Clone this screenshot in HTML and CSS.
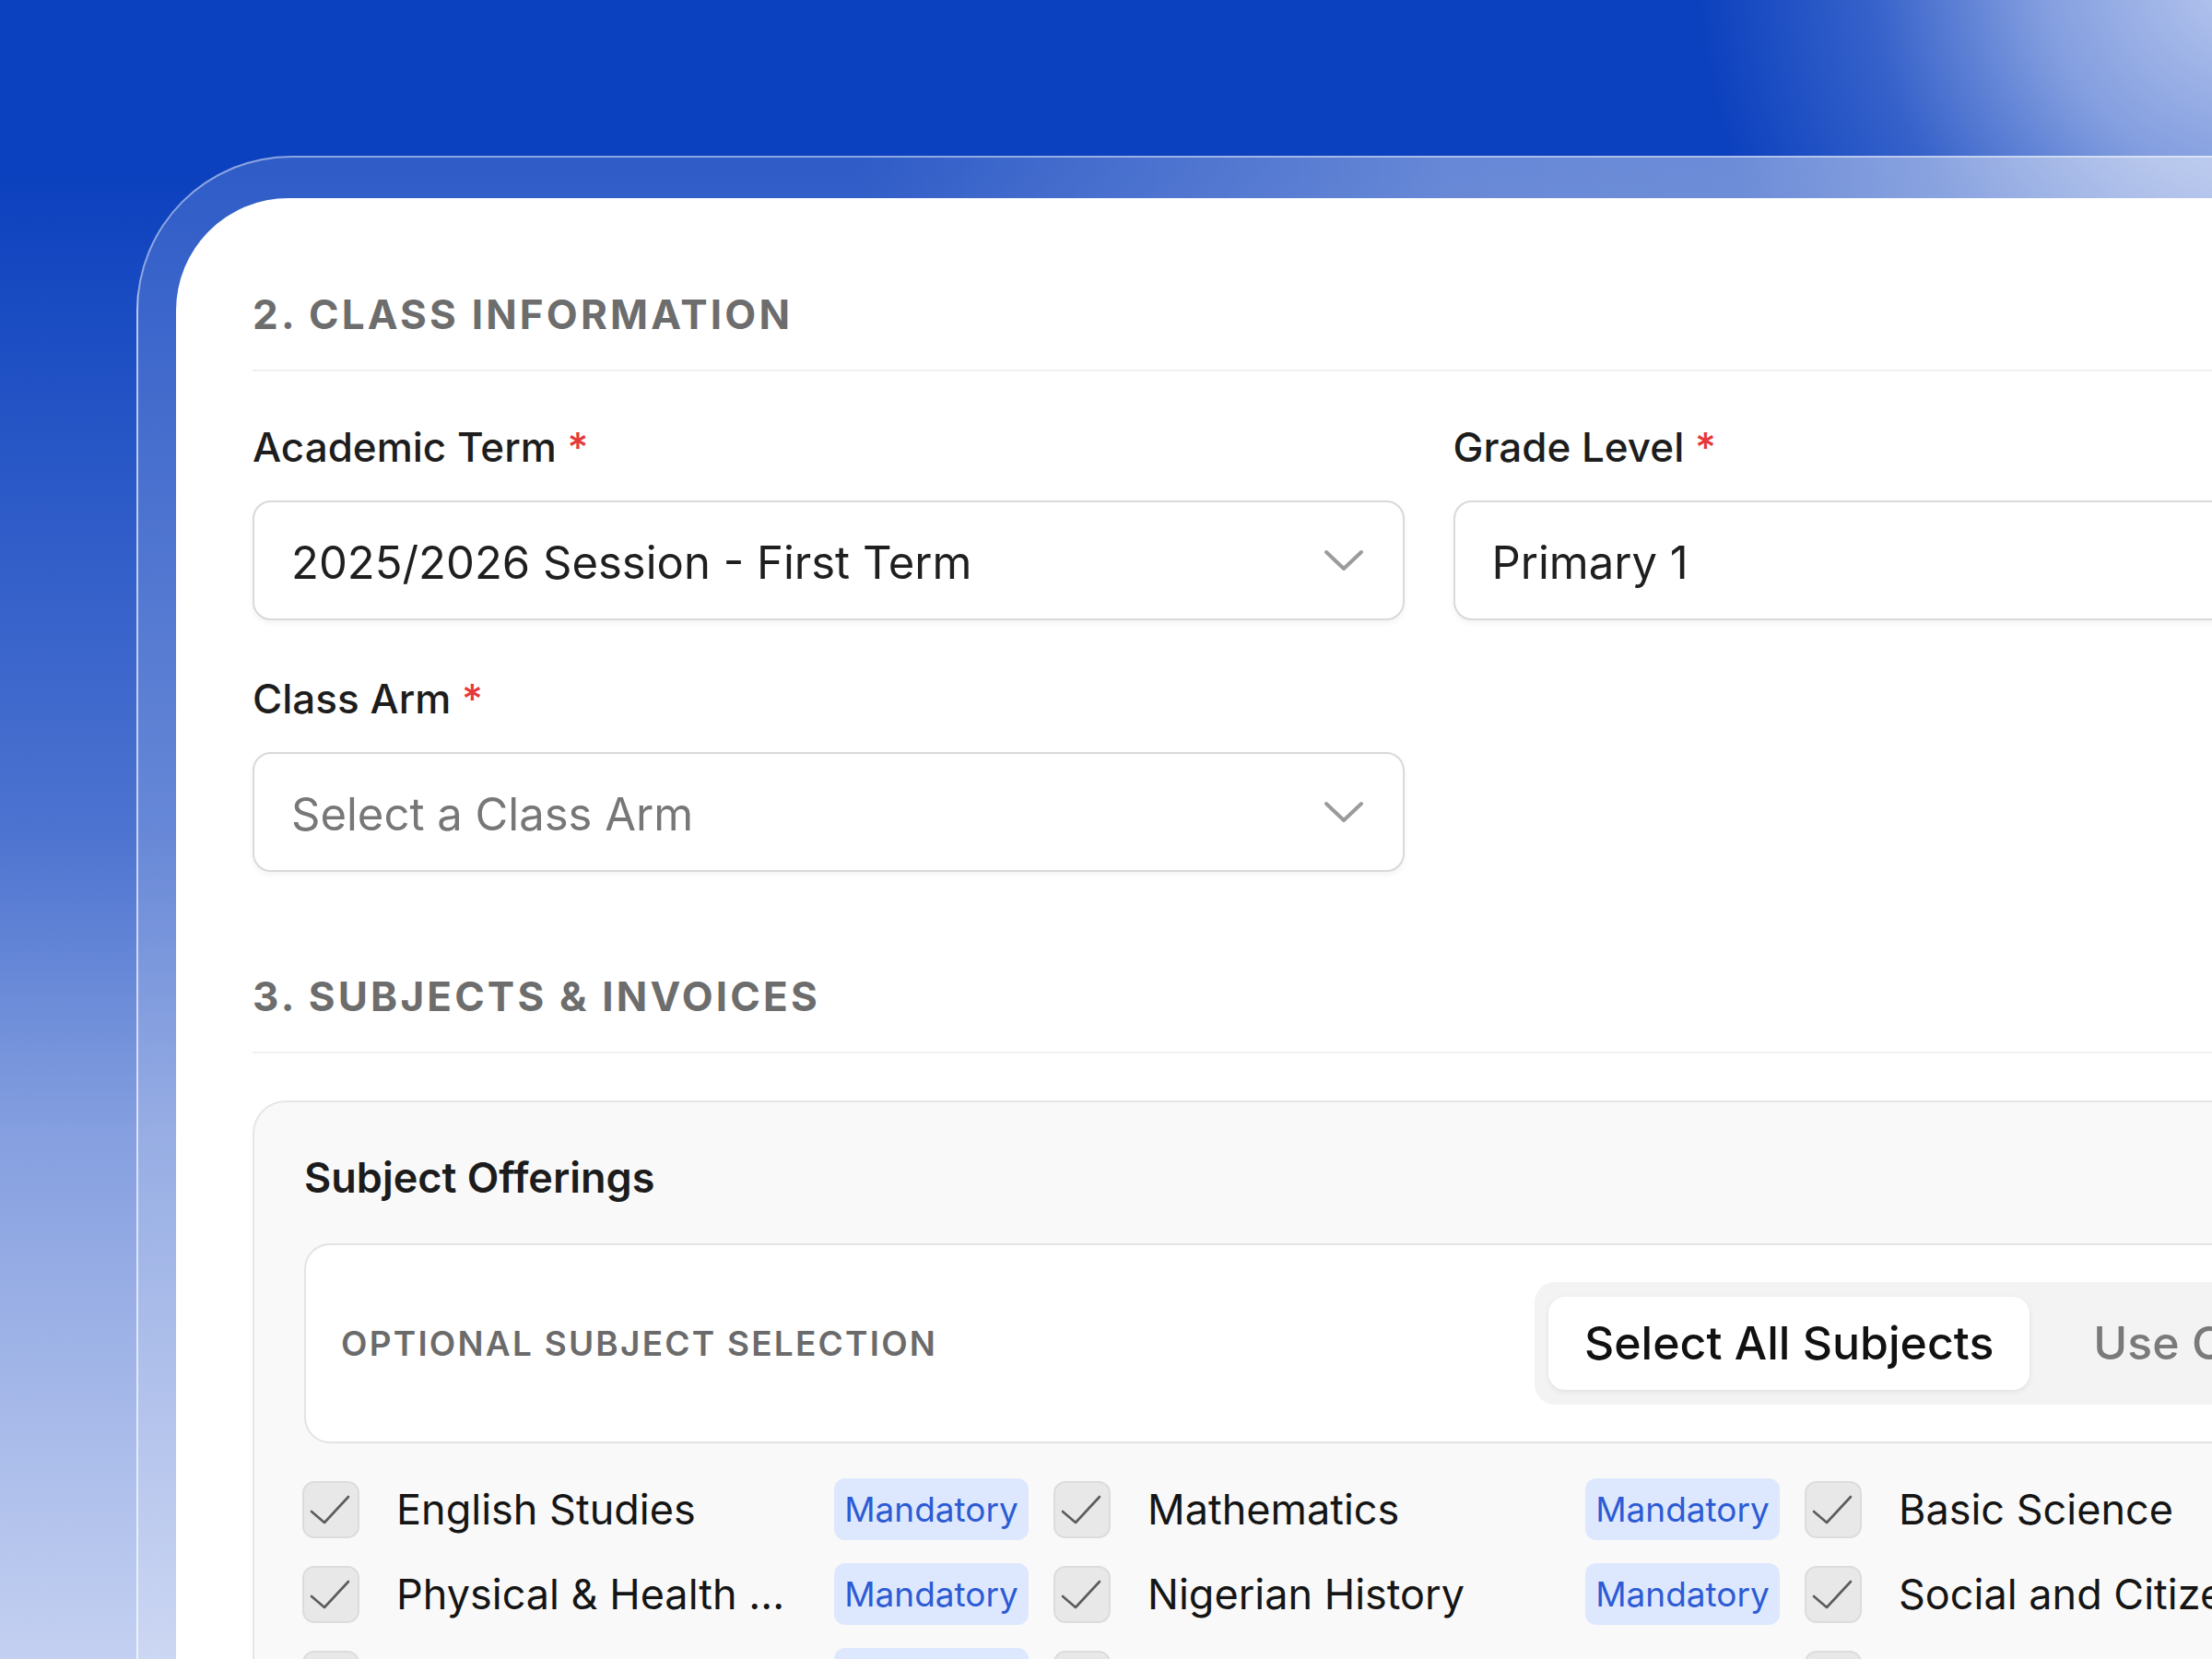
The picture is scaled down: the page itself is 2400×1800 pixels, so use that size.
FILE: index.html
```html
<!DOCTYPE html>
<html lang="en">
<head>
<meta charset="utf-8">
<title>Class Information</title>
<link rel="stylesheet" href="styles.css">
</head>
<body>
<div class="frame">
  <div class="card">
    <section class="section">
      <h2 class="section-title">2. Class Information</h2>
      <div class="field-grid">
        <div class="field">
          <label class="field-label">Academic Term <span class="req">*</span></label>
          <div class="control">
            <span class="control-value">2025/2026 Session - First Term</span>
            <svg class="chevron" width="44" height="24" viewBox="0 0 44 24"><path d="M3 3 L22 21 L41 3" fill="none" stroke="#9b9b9b" stroke-width="4" stroke-linecap="round" stroke-linejoin="round"/></svg>
          </div>
        </div>
        <div class="field">
          <label class="field-label">Grade Level <span class="req">*</span></label>
          <div class="control">
            <span class="control-value">Primary 1</span>
          </div>
        </div>
        <div class="field">
          <label class="field-label">Class Arm <span class="req">*</span></label>
          <div class="control">
            <span class="control-value placeholder">Select a Class Arm</span>
            <svg class="chevron" width="44" height="24" viewBox="0 0 44 24"><path d="M3 3 L22 21 L41 3" fill="none" stroke="#9b9b9b" stroke-width="4" stroke-linecap="round" stroke-linejoin="round"/></svg>
          </div>
        </div>
      </div>
    </section>

    <section class="section section-subjects">
      <h2 class="section-title">3. Subjects &amp; Invoices</h2>
      <div class="offerings">
        <h3 class="offerings-title">Subject Offerings</h3>
        <div class="selection-bar">
          <span class="selection-label">Optional Subject Selection</span>
          <div class="segmented">
            <button class="seg active">Select All Subjects</button>
            <button class="seg">Use Class Preset</button>
          </div>
        </div>
        <div class="subject-grid">
          <div class="subject">
            <span class="checkbox"><svg width="58" height="58" viewBox="0 0 58 58"><path d="M8 31 L22 43 L48 15" fill="none" stroke="#5c5c5c" stroke-width="2.6" stroke-linecap="round" stroke-linejoin="round"/></svg></span>
            <span class="subject-name">English Studies</span>
            <span class="badge">Mandatory</span>
          </div>
          <div class="subject">
            <span class="checkbox"><svg width="58" height="58" viewBox="0 0 58 58"><path d="M8 31 L22 43 L48 15" fill="none" stroke="#5c5c5c" stroke-width="2.6" stroke-linecap="round" stroke-linejoin="round"/></svg></span>
            <span class="subject-name">Mathematics</span>
            <span class="badge">Mandatory</span>
          </div>
          <div class="subject">
            <span class="checkbox"><svg width="58" height="58" viewBox="0 0 58 58"><path d="M8 31 L22 43 L48 15" fill="none" stroke="#5c5c5c" stroke-width="2.6" stroke-linecap="round" stroke-linejoin="round"/></svg></span>
            <span class="subject-name">Basic Science</span>
            <span class="badge">Mandatory</span>
          </div>
          <div class="subject">
            <span class="checkbox"><svg width="58" height="58" viewBox="0 0 58 58"><path d="M8 31 L22 43 L48 15" fill="none" stroke="#5c5c5c" stroke-width="2.6" stroke-linecap="round" stroke-linejoin="round"/></svg></span>
            <span class="subject-name">Physical &amp; Health Education</span>
            <span class="badge">Mandatory</span>
          </div>
          <div class="subject">
            <span class="checkbox"><svg width="58" height="58" viewBox="0 0 58 58"><path d="M8 31 L22 43 L48 15" fill="none" stroke="#5c5c5c" stroke-width="2.6" stroke-linecap="round" stroke-linejoin="round"/></svg></span>
            <span class="subject-name">Nigerian History</span>
            <span class="badge">Mandatory</span>
          </div>
          <div class="subject">
            <span class="checkbox"><svg width="58" height="58" viewBox="0 0 58 58"><path d="M8 31 L22 43 L48 15" fill="none" stroke="#5c5c5c" stroke-width="2.6" stroke-linecap="round" stroke-linejoin="round"/></svg></span>
            <span class="subject-name">Social and Citizenship Studies</span>
            <span class="badge">Mandatory</span>
          </div>
          <div class="subject">
            <span class="checkbox"><svg width="58" height="58" viewBox="0 0 58 58"><path d="M8 31 L22 43 L48 15" fill="none" stroke="#5c5c5c" stroke-width="2.6" stroke-linecap="round" stroke-linejoin="round"/></svg></span>
            <span class="subject-name">Cultural &amp; Creative Arts</span>
            <span class="badge">Mandatory</span>
          </div>
          <div class="subject">
            <span class="checkbox"><svg width="58" height="58" viewBox="0 0 58 58"><path d="M8 31 L22 43 L48 15" fill="none" stroke="#5c5c5c" stroke-width="2.6" stroke-linecap="round" stroke-linejoin="round"/></svg></span>
            <span class="subject-name">Computer Studies</span>
          </div>
          <div class="subject">
            <span class="checkbox"><svg width="58" height="58" viewBox="0 0 58 58"><path d="M8 31 L22 43 L48 15" fill="none" stroke="#5c5c5c" stroke-width="2.6" stroke-linecap="round" stroke-linejoin="round"/></svg></span>
            <span class="subject-name">French Language</span>
          </div>
        </div>
      </div>
    </section>
  </div>
</div>
</body>
</html>
```

FILE: styles.css
```css
html, body {
  margin: 0;
  padding: 0;
  width: 2400px;
  height: 1800px;
  overflow: hidden;
}

body {
  font-family: Inter, "Noto Sans", "Liberation Sans", sans-serif;
  background:
    radial-gradient(circle 680px at 2450px -40px,
      rgba(205, 216, 244, 0.92) 0%,
      rgba(205, 216, 244, 0.62) 35%,
      rgba(205, 216, 244, 0.22) 62%,
      rgba(205, 216, 244, 0) 90%),
    linear-gradient(to bottom,
      rgba(203, 214, 243, 0) 10%,
      rgba(203, 214, 243, 0.12) 24%,
      rgba(203, 214, 243, 0.34) 50%,
      rgba(203, 214, 243, 0.63) 68%,
      rgba(203, 214, 243, 0.96) 100%),
    #0b40be;
}

.frame {
  box-sizing: border-box;
  width: 2600px;
  min-height: 1700px;
  margin: 169px 0 0 148px;
  padding: 44px 0 0 41px;
  border-top-left-radius: 168px;
  border-top: 2px solid rgba(255, 255, 255, 0.45);
  border-left: 2px solid rgba(255, 255, 255, 0.45);
  background: linear-gradient(to right,
    rgba(255, 255, 255, 0.15) 30%,
    rgba(255, 255, 255, 0.38) 55%,
    rgba(255, 255, 255, 0.44) 90%);
}

.card {
  box-sizing: border-box;
  width: 2719px;
  min-height: 1620px;
  padding: 102px 84px 0 83px;
  background: #ffffff;
  border-top-left-radius: 122px;
}

.section-title {
  margin: 0;
  padding-bottom: 36px;
  border-bottom: 2px solid #f0f0f0;
  font-size: 44px;
  line-height: 48px;
  font-weight: 700;
  letter-spacing: 0.072em;
  text-transform: uppercase;
  color: #6d6d6d;
}

.field-grid {
  display: grid;
  grid-template-columns: 1fr 1fr;
  column-gap: 53px;
  row-gap: 59px;
  margin-top: 56px;
}

.field-label {
  display: block;
  margin-bottom: 32px;
  font-size: 44px;
  line-height: 52px;
  font-weight: 500;
  color: #1d1d1d;
}

.req {
  color: #e5393a;
}

.control {
  box-sizing: border-box;
  height: 130px;
  display: flex;
  align-items: center;
  justify-content: space-between;
  padding: 4px 42px 0 40px;
  background: #ffffff;
  border: 2px solid #d9d9d9;
  border-radius: 20px;
  box-shadow: 0 3px 6px rgba(0, 0, 0, 0.05);
  font-size: 49px;
  color: #1f1f1f;
}

.control-value.placeholder {
  color: #777777;
}

.chevron {
  flex: none;
  margin-top: -4px;
}

.section-subjects {
  margin-top: 111px;
}

.offerings {
  margin-top: 51px;
  padding: 57px 54px 60px 52px;
  background: #f9f9f9;
  border: 2px solid #e6e6e6;
  border-radius: 36px;
}

.offerings-title {
  margin: 0 0 46px 2px;
  font-size: 45px;
  line-height: 50px;
  font-weight: 600;
  color: #1c1c1c;
}

.selection-bar {
  display: flex;
  align-items: center;
  justify-content: space-between;
  margin-left: 2px;
  padding: 40px 38px;
  background: #ffffff;
  border: 2px solid #e3e3e3;
  border-radius: 28px;
}

.selection-label {
  font-size: 37px;
  font-weight: 600;
  letter-spacing: 0.06em;
  text-transform: uppercase;
  color: #6b6b6b;
}

.segmented {
  display: flex;
  gap: 30px;
  padding: 16px 15px;
  background: #f3f3f3;
  border-radius: 22px;
}

.seg {
  padding: 22px 39px;
  border: 0;
  border-radius: 18px;
  background: transparent;
  font-family: inherit;
  font-size: 50px;
  line-height: 57px;
  font-weight: 500;
  color: #7a7a7a;
  white-space: nowrap;
}

.seg.active {
  background: #ffffff;
  color: #111111;
  box-shadow: 0 2px 6px rgba(0, 0, 0, 0.08);
}

.subject-grid {
  display: grid;
  grid-template-columns: repeat(3, 788px);
  column-gap: 27px;
  row-gap: 25px;
  margin-top: 38px;
}

.subject {
  display: flex;
  align-items: center;
  height: 67px;
}

.checkbox {
  box-sizing: border-box;
  flex: none;
  width: 62px;
  height: 62px;
  margin-right: 40px;
  display: flex;
  align-items: center;
  justify-content: center;
  background: #e8e8e8;
  border: 2px solid #dcdcdc;
  border-radius: 13px;
}

.subject-name {
  flex: 1;
  min-width: 0;
  margin-right: 40px;
  white-space: nowrap;
  overflow: hidden;
  text-overflow: ellipsis;
  font-size: 45px;
  color: #151515;
}

.badge {
  flex: none;
  box-sizing: border-box;
  width: 211px;
  height: 67px;
  line-height: 67px;
  text-align: center;
  background: #dde8fe;
  border-radius: 12px;
  font-size: 37px;
  color: #2c5bd4;
}
```
